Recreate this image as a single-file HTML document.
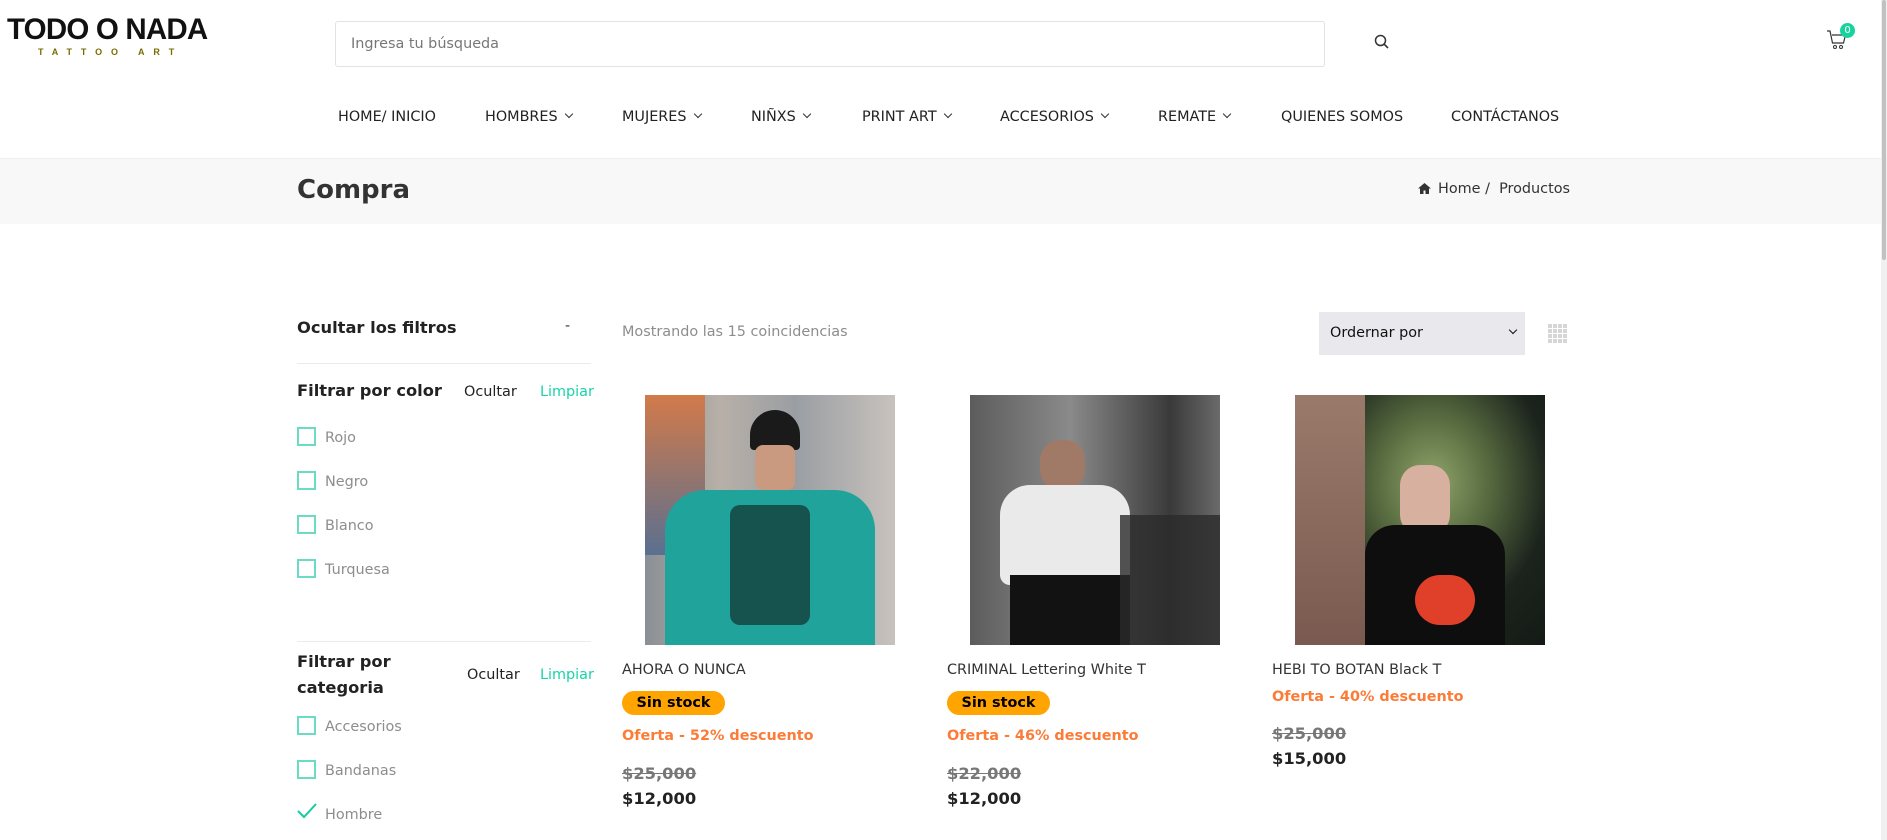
<!DOCTYPE html>
<html><head><meta charset="utf-8">
<style>
*{margin:0;padding:0;box-sizing:border-box}
body{width:1887px;height:840px;overflow:hidden;background:#fff;font-family:"DejaVu Sans","Liberation Sans",sans-serif;color:#333;position:relative}
.a{position:absolute;white-space:nowrap}
.nav{top:109px;font-size:14.4px;color:#222}
.chev{display:inline-block;width:6px;height:6px;border-right:1.3px solid #333;border-bottom:1.3px solid #333;transform:rotate(45deg);margin-left:8px;position:relative;top:-4px}
.cb{position:absolute;left:297px;width:19px;height:19px;border:2px solid #6bdcc3}
.cl{position:absolute;left:325px;font-size:14.4px;color:#8d8d8d}
.img{position:absolute;top:395px;width:250px;height:250px;overflow:hidden}
.t{font-size:14.4px;color:#333}
.badge{position:absolute;background:#ffa400;color:#000;font-weight:bold;font-size:14.4px;border-radius:12px;width:103px;height:24px;line-height:24px;text-align:center}
.of{font-size:14.4px;color:#fb7b37;font-weight:bold}
.old{font-size:16.3px;color:#777;font-weight:bold;text-decoration:line-through}
.pr{font-size:16.3px;color:#222;font-weight:bold}
</style></head><body>
<!-- header -->
<div class="a" style="left:7px;top:13px;font-family:'Liberation Sans',sans-serif;font-weight:900;font-size:29.5px;letter-spacing:-0.8px;color:#111">TODO O NADA</div>
<div class="a" style="left:38px;top:47px;font-family:'Liberation Sans',sans-serif;font-weight:bold;font-size:9px;letter-spacing:8.9px;color:#7a6b00">TATTOO ART</div>
<div class="a" style="left:335px;top:21px;width:990px;height:46px;border:1px solid #e3e3e3;border-radius:3px"></div>
<div class="a" style="left:351px;top:36px;font-size:14.4px;color:#777">Ingresa tu búsqueda</div>
<svg class="a" style="left:1374px;top:34px" width="16" height="16" viewBox="0 0 16 16"><circle cx="6.5" cy="6.5" r="5" fill="none" stroke="#333" stroke-width="1.5"/><path d="M10.2 10.2L14 14" stroke="#333" stroke-width="1.6"/></svg>
<svg class="a" style="left:1826px;top:28px" width="22" height="24" viewBox="0 0 22 24"><path d="M1 3h3l2.5 12h11l2-8H6" fill="none" stroke="#333" stroke-width="1.2"/><circle cx="9" cy="19" r="1.5" fill="none" stroke="#333"/><circle cx="15" cy="19" r="1.5" fill="none" stroke="#333"/></svg>
<div class="a" style="left:1840px;top:23px;width:15px;height:15px;border-radius:50%;background:#19d39e;color:#fff;font-size:10px;text-align:center;line-height:15px">0</div>
<div class="a nav" style="left:338px">HOME/ INICIO</div>
<div class="a nav" style="left:485px">HOMBRES<span class="chev"></span></div>
<div class="a nav" style="left:622px">MUJERES<span class="chev"></span></div>
<div class="a nav" style="left:751px">NIÑXS<span class="chev"></span></div>
<div class="a nav" style="left:862px">PRINT ART<span class="chev"></span></div>
<div class="a nav" style="left:1000px">ACCESORIOS<span class="chev"></span></div>
<div class="a nav" style="left:1158px">REMATE<span class="chev"></span></div>
<div class="a nav" style="left:1281px">QUIENES SOMOS</div>
<div class="a nav" style="left:1451px">CONTÁCTANOS</div>
<!-- band -->
<div class="a" style="left:0;top:158px;width:1881px;height:66px;background:#f8f8f8;border-top:1px solid #eee"></div>
<div class="a" style="left:297px;top:175px;font-size:26px;font-weight:bold;color:#333">Compra</div>
<svg class="a" style="left:1418px;top:183px" width="13" height="11" viewBox="0 0 13 11"><path d="M6.5 0L0 5.5h2V11h3.5V7.5h2V11H11V5.5h2z" fill="#333"/></svg>
<div class="a" style="left:1438px;top:181px;font-size:14.4px;color:#333">Home /&nbsp; Productos</div>
<!-- scrollbar -->
<div class="a" style="left:1881px;top:0;width:6px;height:840px;background:#f0f0f0"></div>
<div class="a" style="left:1882px;top:0;width:4px;height:260px;background:#c1c1c1;border-radius:2px"></div>
<!-- sidebar -->
<div class="a" style="left:297px;top:318px;font-size:16.3px;font-weight:bold;color:#222">Ocultar los filtros</div>
<div class="a" style="left:565px;top:318px;font-size:14px">-</div>
<div class="a" style="left:297px;top:363px;width:294px;height:1px;background:#ebebeb"></div>
<div class="a" style="left:297px;top:381px;font-size:16.3px;font-weight:bold;color:#222">Filtrar por color</div>
<div class="a" style="left:464px;top:384px;font-size:14.4px;color:#222">Ocultar</div>
<div class="a" style="left:540px;top:384px;font-size:14.4px;color:#19d3a8">Limpiar</div>
<div class="cb" style="top:427px"></div><div class="cl" style="top:430px">Rojo</div>
<div class="cb" style="top:471px"></div><div class="cl" style="top:474px">Negro</div>
<div class="cb" style="top:515px"></div><div class="cl" style="top:518px">Blanco</div>
<div class="cb" style="top:559px"></div><div class="cl" style="top:562px">Turquesa</div>
<div class="a" style="left:297px;top:641px;width:294px;height:1px;background:#ebebeb"></div>
<div class="a" style="left:297px;top:649px;font-size:16.3px;font-weight:bold;color:#222;line-height:26px">Filtrar por<br>categoria</div>
<div class="a" style="left:467px;top:667px;font-size:14.4px;color:#222">Ocultar</div>
<div class="a" style="left:540px;top:667px;font-size:14.4px;color:#19d3a8">Limpiar</div>
<div class="cb" style="top:716px"></div><div class="cl" style="top:719px">Accesorios</div>
<div class="cb" style="top:760px"></div><div class="cl" style="top:763px">Bandanas</div>
<svg class="a" style="left:297px;top:803px" width="20" height="16" viewBox="0 0 20 16"><path d="M1 8l6 6L19 1" fill="none" stroke="#19c9a0" stroke-width="2"/></svg>
<div class="cl" style="top:807px">Hombre</div>
<!-- toolbar -->
<div class="a" style="left:622px;top:324px;font-size:14.4px;color:#8d8d8d">Mostrando las 15 coincidencias</div>
<div class="a" style="left:1319px;top:312px;width:206px;height:43px;background:#e9e9ed"></div>
<div class="a" style="left:1330px;top:325px;font-size:14.4px;color:#111">Ordernar por</div>
<div class="a" style="left:1510px;top:327px;width:6px;height:6px;border-right:1.5px solid #111;border-bottom:1.5px solid #111;transform:rotate(45deg)"></div>
<svg class="a" style="left:1548px;top:324px" width="20" height="20" viewBox="0 0 20 20" fill="#d6d6d6"><rect x="0" y="0" width="4" height="4"/><rect x="5" y="0" width="4" height="4"/><rect x="10" y="0" width="4" height="4"/><rect x="15" y="0" width="4" height="4"/><rect x="0" y="5" width="4" height="4"/><rect x="5" y="5" width="4" height="4"/><rect x="10" y="5" width="4" height="4"/><rect x="15" y="5" width="4" height="4"/><rect x="0" y="10" width="4" height="4"/><rect x="5" y="10" width="4" height="4"/><rect x="10" y="10" width="4" height="4"/><rect x="15" y="10" width="4" height="4"/><rect x="0" y="15" width="4" height="4"/><rect x="5" y="15" width="4" height="4"/><rect x="10" y="15" width="4" height="4"/><rect x="15" y="15" width="4" height="4"/></svg>
<!-- product images -->
<div class="img" style="left:645px;background:linear-gradient(90deg,#8a8f95,#b8b0a8 30%,#9a9ea3 60%,#c8c2bd)">
  <div class="a" style="left:0;top:0;width:60px;height:160px;background:linear-gradient(#d27a4a,#5a7090)"></div>
  <div class="a" style="left:105px;top:15px;width:50px;height:40px;border-radius:25px 25px 4px 4px;background:#1a1a1a"></div>
  <div class="a" style="left:110px;top:50px;width:40px;height:45px;background:#c99a80;border-radius:8px"></div>
  <div class="a" style="left:20px;top:95px;width:210px;height:155px;background:#1fa39a;border-radius:40px 40px 0 0"></div>
  <div class="a" style="left:85px;top:110px;width:80px;height:120px;background:#14302e;opacity:.7;border-radius:10px"></div>
</div>
<div class="img" style="left:970px;background:linear-gradient(90deg,#5c5c5c,#8a8a8a 40%,#3a3a3a 80%,#6a6a6a)">
  <div class="a" style="left:70px;top:45px;width:45px;height:50px;background:#a07a66;border-radius:20px"></div>
  <div class="a" style="left:30px;top:90px;width:130px;height:100px;background:#eaeaea;border-radius:30px 30px 10px 10px"></div>
  <div class="a" style="left:40px;top:180px;width:120px;height:70px;background:#121212"></div>
  <div class="a" style="left:150px;top:120px;width:100px;height:130px;background:#2a2a2a;opacity:.8"></div>
</div>
<div class="img" style="left:1295px;background:radial-gradient(ellipse at 55% 35%,#8fa56a 0,#55683e 30%,#1c231d 60%,#121712)">
  <div class="a" style="left:0;top:0;width:70px;height:250px;background:linear-gradient(#9a7a6a,#7a5a50)"></div>
  <div class="a" style="left:105px;top:70px;width:50px;height:70px;background:#d8b0a0;border-radius:20px"></div>
  <div class="a" style="left:70px;top:130px;width:140px;height:120px;background:#0e0e0e;border-radius:30px 30px 0 0"></div>
  <div class="a" style="left:120px;top:180px;width:60px;height:50px;background:#e0402a;border-radius:30px"></div>
</div>
<!-- product 1 -->
<div class="a t" style="left:622px;top:662px">AHORA O NUNCA</div>
<div class="badge" style="left:622px;top:691px">Sin stock</div>
<div class="a of" style="left:622px;top:728px">Oferta - 52% descuento</div>
<div class="a old" style="left:622px;top:764px">$25,000</div>
<div class="a pr" style="left:622px;top:789px">$12,000</div>
<!-- product 2 -->
<div class="a t" style="left:947px;top:662px">CRIMINAL Lettering White T</div>
<div class="badge" style="left:947px;top:691px">Sin stock</div>
<div class="a of" style="left:947px;top:728px">Oferta - 46% descuento</div>
<div class="a old" style="left:947px;top:764px">$22,000</div>
<div class="a pr" style="left:947px;top:789px">$12,000</div>
<!-- product 3 -->
<div class="a t" style="left:1272px;top:662px">HEBI TO BOTAN Black T</div>
<div class="a of" style="left:1272px;top:689px">Oferta - 40% descuento</div>
<div class="a old" style="left:1272px;top:724px">$25,000</div>
<div class="a pr" style="left:1272px;top:749px">$15,000</div>
</body></html>
